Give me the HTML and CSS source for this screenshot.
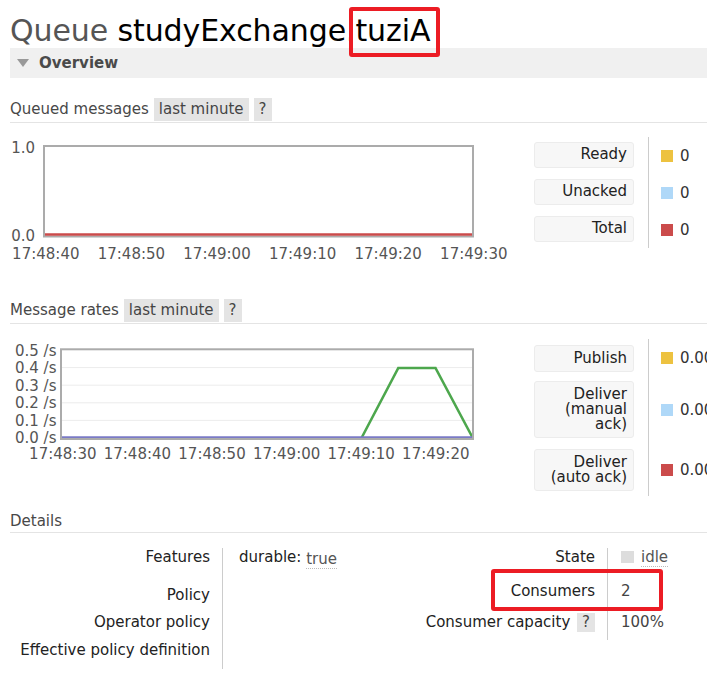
FILE: index.html
```html
<!DOCTYPE html>
<html lang="en">
<head>
<meta charset="utf-8">
<title>Queue studyExchange.tuziA</title>
<link rel="stylesheet" href="styles.css">
</head>
<body>
<div class="page">
  <h1 class="title"><span class="kind">Queue</span> studyExchange.tuziA<span class="mark title-mark"></span></h1>

  <div class="section-bar"><span class="tri"></span>Overview</div>

  <div class="sub-head">
    <span class="sub-title">Queued messages</span>
    <span class="pill">last minute</span>
    <span class="pill">?</span>
  </div>

  <div class="chart-row chart-row-1">
    <svg class="chart" width="524" height="128" viewBox="0 0 524 128">
      <rect x="34" y="9" width="429" height="90.5" fill="#fff" stroke="#ababab" stroke-width="2"/>
      <line x1="35" y1="97.6" x2="462" y2="97.6" stroke="#cb4b4b" stroke-width="2.5"/>
      <g class="ylab" text-anchor="end">
        <text x="25" y="16">1.0</text>
        <text x="25" y="104">0.0</text>
      </g>
      <g class="xlab" text-anchor="middle">
        <text x="35.8" y="121.5">17:48:40</text>
        <text x="121.4" y="121.5">17:48:50</text>
        <text x="207" y="121.5">17:49:00</text>
        <text x="292.6" y="121.5">17:49:10</text>
        <text x="378.2" y="121.5">17:49:20</text>
        <text x="463.8" y="121.5">17:49:30</text>
      </g>
    </svg>
    <div class="legend legend-1">
      <div class="lrow"><div class="lcell"><div class="lbox">Ready</div></div><div class="lval"><span class="sw sw-yellow"></span>0</div></div>
      <div class="lrow"><div class="lcell"><div class="lbox">Unacked</div></div><div class="lval"><span class="sw sw-blue"></span>0</div></div>
      <div class="lrow"><div class="lcell"><div class="lbox">Total</div></div><div class="lval"><span class="sw sw-red"></span>0</div></div>
    </div>
  </div>

  <div class="sub-head sub-head-2">
    <span class="sub-title">Message rates</span>
    <span class="pill">last minute</span>
    <span class="pill">?</span>
  </div>

  <div class="chart-row chart-row-2">
    <svg class="chart" width="524" height="128" viewBox="0 0 524 128">
      <rect x="51" y="10.3" width="412" height="89.7" fill="#fff"/>
      <g stroke="#ececec" stroke-width="1">
        <line x1="52" y1="28.6" x2="462" y2="28.6"/>
        <line x1="52" y1="46.2" x2="462" y2="46.2"/>
        <line x1="52" y1="63.8" x2="462" y2="63.8"/>
        <line x1="52" y1="81.4" x2="462" y2="81.4"/>
      </g>
      <polyline points="351.5,99 388.3,29 425.5,29 462.8,99" fill="none" stroke="#4da74d" stroke-width="2.6" stroke-linejoin="miter"/>
      <line x1="52" y1="98.6" x2="462" y2="98.6" stroke="#7a7ac6" stroke-width="2.5"/>
      <rect x="51" y="10.3" width="412" height="89.7" fill="none" stroke="#ababab" stroke-width="2"/>
      <g class="ylab" text-anchor="end">
        <text x="46.5" y="17">0.5 /s</text>
        <text x="46.5" y="34.4">0.4 /s</text>
        <text x="46.5" y="51.8">0.3 /s</text>
        <text x="46.5" y="69.2">0.2 /s</text>
        <text x="46.5" y="86.6">0.1 /s</text>
        <text x="46.5" y="104">0.0 /s</text>
      </g>
      <g class="xlab" text-anchor="middle">
        <text x="52.8" y="120">17:48:30</text>
        <text x="127.4" y="120">17:48:40</text>
        <text x="202" y="120">17:48:50</text>
        <text x="276.6" y="120">17:49:00</text>
        <text x="351.2" y="120">17:49:10</text>
        <text x="425.8" y="120">17:49:20</text>
      </g>
    </svg>
    <div class="legend legend-2">
      <div class="lrow"><div class="lcell"><div class="lbox">Publish</div></div><div class="lval"><span class="sw sw-yellow"></span>0.00 /s</div></div>
      <div class="lrow"><div class="lcell"><div class="lbox">Deliver (manual ack)</div></div><div class="lval"><span class="sw sw-blue"></span>0.00 /s</div></div>
      <div class="lrow"><div class="lcell"><div class="lbox">Deliver (auto ack)</div></div><div class="lval"><span class="sw sw-red"></span>0.00 /s</div></div>
    </div>
  </div>

  <div class="sub-head sub-head-3">
    <span class="sub-title">Details</span>
  </div>

  <div class="details">
    <div class="dtable dtable-left">
      <div class="drow drow-first"><div class="dlabel">Features</div><div class="dval"><span class="key">durable:</span> <span class="abbr">true</span></div></div>
      <div class="drow"><div class="dlabel">Policy</div><div class="dval"></div></div>
      <div class="drow drow-op"><div class="dlabel">Operator policy</div><div class="dval"></div></div>
      <div class="drow drow-last"><div class="dlabel">Effective policy definition</div><div class="dval"></div></div>
    </div>
    <div class="dtable dtable-right">
      <div class="drow rrow-state"><div class="dlabel">State</div><div class="dval"><span class="idle-sq"></span><span class="abbr">idle</span></div></div>
      <div class="drow rrow-cons"><div class="dlabel">Consumers</div><div class="dval">2</div></div>
      <div class="drow rrow-cap"><div class="dlabel">Consumer capacity <span class="pill pill-small">?</span></div><div class="dval">100%</div></div>
      <span class="mark cons-mark"></span>
    </div>
  </div>
</div>
</body>
</html>
```

FILE: styles.css
```css
html {
  overflow: hidden;
}

body {
  margin: 0;
  background: #fff;
  font-family: "DejaVu Sans", Verdana, sans-serif;
  font-size: 15px;
  color: #222;
}

.page {
  padding-left: 10px;
  width: 697px;
}

.title {
  position: relative;
  margin: 0;
  padding-top: 13px;
  height: 35px;
  line-height: 35px;
  font-size: 30px;
  font-weight: normal;
  color: #000;
  white-space: nowrap;
  letter-spacing: -0.1px;
}

.title .kind {
  color: #555;
}

.mark {
  position: absolute;
  border: 4px solid #ec1c24;
  border-radius: 3px;
  box-sizing: border-box;
}

.title-mark {
  left: 339px;
  top: 7px;
  width: 91px;
  height: 50px;
}

.section-bar {
  display: flex;
  align-items: center;
  height: 30px;
  background: #f0f0f0;
  font-weight: bold;
  color: #4a4a4a;
  padding-left: 7px;
}

.tri {
  width: 0;
  height: 0;
  border-left: 6.5px solid transparent;
  border-right: 6.5px solid transparent;
  border-top: 8px solid #999;
  margin-right: 10px;
}

.sub-head {
  display: flex;
  align-items: flex-end;
  gap: 5px;
  margin-top: 20px;
  height: 23px;
  line-height: 23px;
  padding-bottom: 1px;
  border-bottom: 1px solid #e4e4e4;
  color: #484848;
}

.sub-head-2 {
  margin-top: 34px;
}

.sub-head-3 {
  margin-top: 16px;
  height: 18px;
  line-height: 18px;
  padding-bottom: 2px;
}

.pill {
  background: #e4e4e4;
  padding: 0 5px;
  color: #444;
}

.chart-row {
  display: flex;
  align-items: flex-start;
  margin-top: 14px;
}

.chart-row-2 {
  margin-top: 15px;
}

.chart {
  flex: none;
  display: block;
}

.chart text {
  font-family: "DejaVu Sans", Verdana, sans-serif;
  font-size: 15px;
  fill: #555;
}

.legend {
  display: flex;
  flex-direction: column;
}

.lrow {
  display: flex;
}

.lcell {
  width: 100px;
  padding: 5px 0 6px;
}

.legend-2 .lrow:first-child .lcell {
  padding-top: 6px;
  padding-bottom: 4px;
}

.legend-2 .lrow:last-child .lcell {
  padding-bottom: 5px;
}

.lbox {
  background: #f7f7f7;
  border: 1px solid #ececec;
  border-radius: 3px;
  padding: 4px 6px 5px;
  line-height: 15px;
  text-align: right;
  color: #222;
}

.legend-2 .lbox {
  padding: 5px 6px;
}

.lval {
  display: flex;
  align-items: center;
  margin-left: 14px;
  border-left: 1px solid #ccc;
  padding-left: 12px;
  color: #333;
  white-space: nowrap;
}

.sw {
  display: inline-block;
  width: 12px;
  height: 12px;
  margin-right: 7px;
}

.sw-yellow { background: #edc240; }
.sw-blue { background: #afd8f8; }
.sw-red { background: #cb4b4b; }

.details {
  display: flex;
  margin-top: 15px;
}

.dtable {
  display: flex;
  flex-direction: column;
}

.dtable-left {
  width: 350px;
}

.dtable-right {
  position: relative;
}

.drow {
  display: flex;
  line-height: 18px;
}

.dlabel {
  flex: none;
  text-align: right;
  color: #222;
  padding: 4px 0 5px;
  white-space: nowrap;
}

.dval {
  flex: 1;
  border-left: 1px solid #ccc;
  padding: 4px 0 5px 16px;
  color: #444;
  white-space: nowrap;
}

.dtable-left .dlabel {
  width: 200px;
  margin-right: 12px;
}

.dtable-left .drow-first .dlabel,
.dtable-left .drow-first .dval {
  padding-top: 0;
  padding-bottom: 16px;
}

.dtable-left .drow-op .dlabel,
.dtable-left .drow-op .dval {
  padding-bottom: 6px;
}

.dtable-left .drow-last .dlabel,
.dtable-left .drow-last .dval {
  padding-bottom: 10px;
}

.key {
  color: #222;
}

.abbr {
  color: #555;
  border-bottom: 1px dotted #bbb;
}

.dtable-left .abbr {
  position: relative;
  top: 2px;
}

.dtable-right .dlabel {
  width: 235px;
  margin-right: 12px;
}

.dtable-right .dval {
  padding-left: 13px;
  width: 80px;
}

.rrow-state .dlabel,
.rrow-state .dval {
  padding-top: 0;
  padding-bottom: 12px;
}

.rrow-cons .dlabel,
.rrow-cons .dval {
  padding-bottom: 9px;
}

.rrow-cap .dlabel,
.rrow-cap .dval {
  padding-bottom: 8px;
}

.pill-small {
  display: inline-block;
  line-height: 19px;
  margin-left: 2px;
}

.idle-sq {
  display: inline-block;
  width: 13px;
  height: 12px;
  background: #ddd;
  margin-right: 7px;
  vertical-align: -1px;
}

.cons-mark {
  left: 131px;
  top: 21px;
  width: 172px;
  height: 42px;
}
```
